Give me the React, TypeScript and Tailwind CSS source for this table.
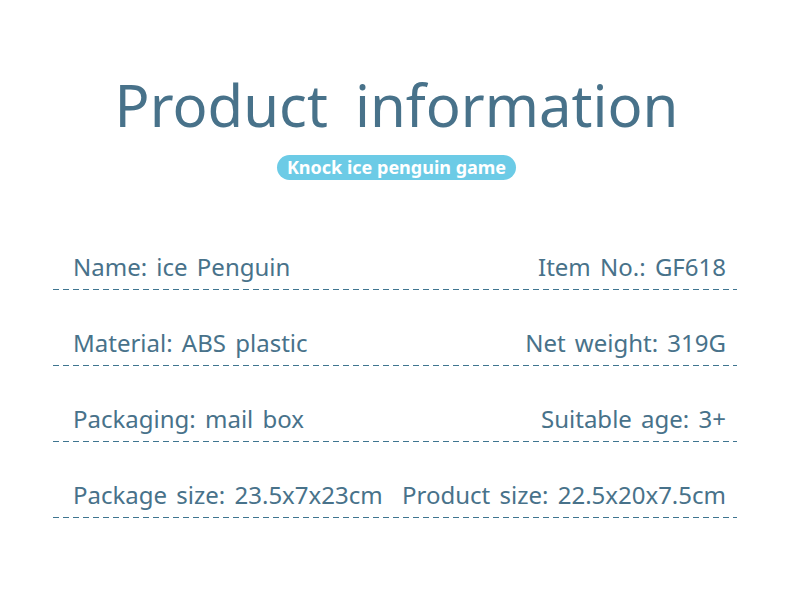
import React from 'react';

const rows = [
    ['Name: ice Penguin', 'Item No.: GF618'],
    ['Material: ABS plastic', 'Net weight: 319G'],
    ['Packaging: mail box', 'Suitable age: 3+'],
    ['Package size: 23.5x7x23cm', 'Product size: 22.5x20x7.5cm'],
];

export default function App() {
    return (
        <div className="w-[790px] h-[600px] bg-white flex flex-col items-center text-[#48728a]" style={{ fontFamily: '"Noto Sans", sans-serif' }}>
            <h1 className="mt-[70px] ml-[3px] text-[58px] leading-[70px] [word-spacing:12px]">Product information</h1>
            <div className="mt-[15px] ml-[3px] h-[25px] px-[10px] rounded-full bg-[#6ccbe6] text-white text-[18px] font-bold leading-[25px]">Knock ice penguin game</div>
            <div className="mt-[34px] w-full px-[53px] flex flex-col">
                {rows.map(([l, r], i) => (
                    <div key={i} className="h-[76px] flex flex-col justify-end">
                        <div className="flex justify-between pl-[20px] pr-[11px] pb-[7px] text-[24px] leading-[30px] [word-spacing:3px]">
                            <span>{l}</span>
                            <span>{r}</span>
                        </div>
                        <div className="h-px bg-[linear-gradient(to_right,#3f7590_60%,transparent_60%)] bg-[length:10px_1px]" />
                    </div>
                ))}
            </div>
        </div>
    );
}
